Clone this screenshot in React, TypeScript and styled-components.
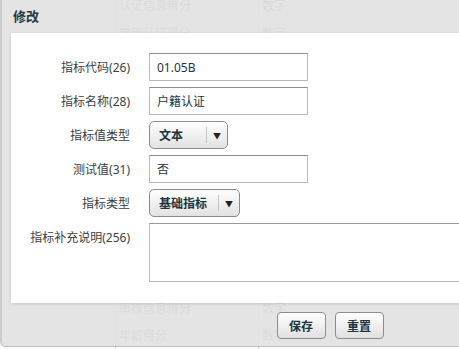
import styled, { createGlobalStyle } from 'styled-components';

const GlobalStyle = createGlobalStyle`
  html, body {
    margin: 0;
    padding: 0;
    background: #ffffff;
    overflow: hidden;
  }
  body {
    font-family: "Noto Sans", "Noto Sans CJK SC", sans-serif;
    font-size: 12px;
  }
`;

const Page = styled.div`
  position: relative;
  width: 459px;
  height: 349px;
  overflow: hidden;
`;

const BackTable = styled.div`
  margin-top: -8px;
  margin-left: 115px;
  display: flex;
  flex-direction: column;
`;

const BackRow = styled.div`
  display: grid;
  grid-template-columns: 143px 200px;
  height: 27.5px;
  border-bottom: 1px solid #d8d8d8;
  align-items: center;
  color: #555;
  font-size: 12px;
  box-sizing: border-box;
`;

const BackCell = styled.div`
  padding-left: 3px;
  border-left: 1px solid #d0d0d0;
  height: 100%;
  display: flex;
  align-items: center;
`;

const Dialog = styled.div`
  position: absolute;
  left: 0;
  top: -20px;
  width: 659px;
  bottom: 2px;
  box-sizing: border-box;
  background: rgba(226, 226, 226, 0.94);
  border: 1px solid #bcbcbc;
  border-left: 2px solid #cdcdcd;
  border-radius: 5px;
  display: flex;
  flex-direction: column;
`;

const TitleBar = styled.div`
  height: 52px;
  padding: 0 0 8px 11px;
  display: flex;
  align-items: flex-end;
  box-sizing: border-box;
  font-weight: bold;
  font-size: 13px;
  color: #1f3641;
`;

const Panel = styled.div`
  margin: 0 9px;
  height: 270px;
  background: #ffffff;
  box-shadow: 0 1px 3px rgba(0, 0, 0, 0.12);
  padding-top: 20px;
  box-sizing: border-box;
  display: grid;
  grid-template-columns: 119px 1fr;
  column-gap: 19px;
  row-gap: 6px;
  align-content: start;
`;

const Label = styled.label<{ $top?: boolean }>`
  text-align: right;
  color: #3a3f44;
  font-size: 12px;
  align-self: ${(p) => (p.$top ? 'start' : 'center')};
  padding-top: ${(p) => (p.$top ? '5px' : '0')};
`;

const TextInput = styled.input`
  width: 159px;
  height: 28px;
  box-sizing: border-box;
  border: 1px solid #b9b9b9;
  border-top-color: #8e8e8e;
  padding: 0 7px;
  font-family: "Noto Sans", "Noto Sans CJK SC", sans-serif;
  font-size: 12px;
  color: #1c3440;
  outline: none;
`;

const TextArea = styled.textarea`
  width: 480px;
  height: 59px;
  box-sizing: border-box;
  border: 1px solid #b9b9b9;
  border-top-color: #9a9a9a;
  resize: none;
  outline: none;
  font-family: "Noto Sans", "Noto Sans CJK SC", sans-serif;
`;

const SelectButton = styled.div<{ $width: number }>`
  width: ${(p) => p.$width}px;
  height: 28px;
  box-sizing: border-box;
  border: 1px solid #8c8c8c;
  border-radius: 5px;
  background: linear-gradient(#ffffff, #e2e2e2);
  display: flex;
  align-items: center;
  font-weight: bold;
  color: #1c3440;
  font-size: 12px;
`;

const SelectText = styled.span`
  flex: 1;
  padding-left: 9px;
`;

const SelectArrow = styled.span`
  width: 20px;
  height: 16px;
  border-left: 1px solid #c4c4c4;
  display: flex;
  align-items: center;
  justify-content: center;
  font-size: 8px;
  color: #222;
`;

const Footer = styled.div`
  flex: 1;
  display: flex;
  justify-content: center;
  align-items: center;
  gap: 9px;
  padding-top: 2px;
`;

const Button = styled.button`
  width: 49px;
  height: 27px;
  border: 1px solid #8c8c8c;
  border-radius: 4px;
  background: linear-gradient(#ffffff, #e0e0e0);
  font-family: "Noto Sans", "Noto Sans CJK SC", sans-serif;
  font-size: 12px;
  font-weight: bold;
  color: #1c3440;
  padding: 0;
`;

const backRows = [
  ['认证信息得分', '数字'],
  ['学历认证得分', '数字'],
  ['工作信息得分', '数字'],
  ['收入信息得分', '数字'],
  ['资产信息得分', '数字'],
  ['信用记录得分', '数字'],
  ['联系人得分', '数字'],
  ['社保信息得分', '数字'],
  ['公积金得分', '数字'],
  ['户籍认证得分', '数字'],
  ['婚姻状况得分', '数字'],
  ['审核信息得分', '数字'],
  ['年龄得分', '数字'],
];

const Select = ({ text, width }: { text: string; width: number }) => (
  <SelectButton $width={width}>
    <SelectText>{text}</SelectText>
    <SelectArrow>▼</SelectArrow>
  </SelectButton>
);

export default function App() {
  return (
    <Page>
      <GlobalStyle />
      <BackTable>
        {backRows.map(([a, b]) => (
          <BackRow key={a}>
            <BackCell>{a}</BackCell>
            <BackCell>{b}</BackCell>
          </BackRow>
        ))}
      </BackTable>
      <Dialog>
        <TitleBar>修改</TitleBar>
        <Panel>
          <Label>指标代码(26)</Label>
          <TextInput defaultValue="01.05B" />
          <Label>指标名称(28)</Label>
          <TextInput defaultValue="户籍认证" />
          <Label>指标值类型</Label>
          <Select text="文本" width={79} />
          <Label>测试值(31)</Label>
          <TextInput defaultValue="否" />
          <Label>指标类型</Label>
          <Select text="基础指标" width={91} />
          <Label $top>指标补充说明(256)</Label>
          <TextArea />
        </Panel>
        <Footer>
          <Button>保存</Button>
          <Button>重置</Button>
        </Footer>
      </Dialog>
    </Page>
  );
}
